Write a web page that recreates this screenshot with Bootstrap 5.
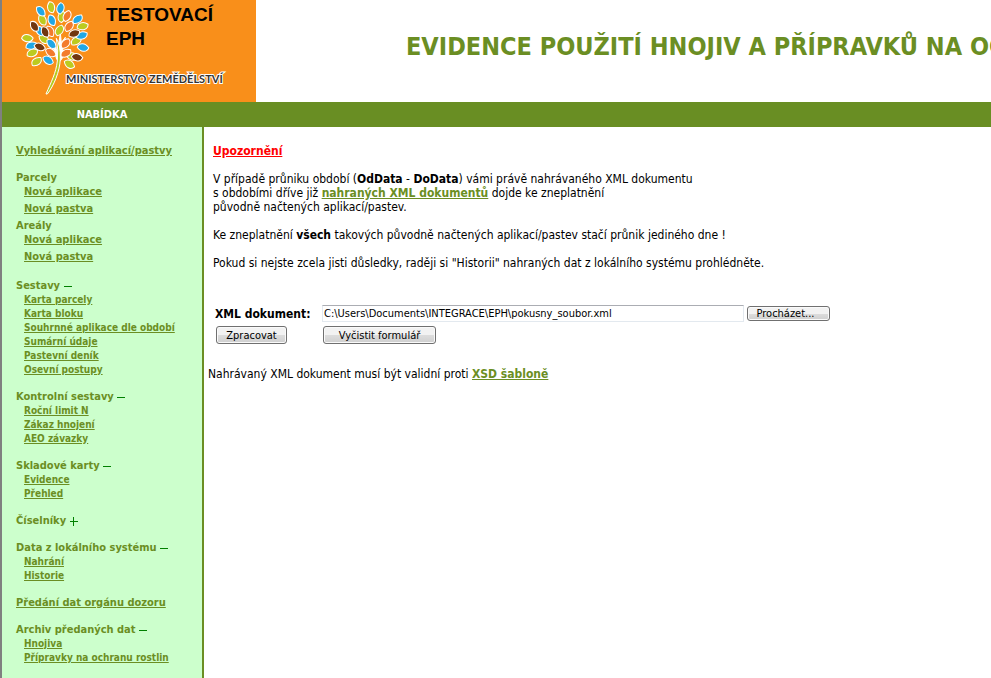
<!DOCTYPE html>
<html lang="cs">
<head>
<meta charset="utf-8">
<meta name="viewport" content="width=device-width, initial-scale=1">
<title>Evidence použití hnojiv a přípravků na ochranu rostlin</title>
<link href="https://cdn.jsdelivr.net/npm/bootstrap@5.3.0/dist/css/bootstrap.min.css" rel="stylesheet">
<style>
:root { --olive: #6b8e23; --mint: #ccffcc; }
body { font-family: "DejaVu Sans Condensed", "Noto Sans", sans-serif; font-size: 12px; line-height: 14px; color: #000; border-left: 2px solid #808080; }
a, a:hover { color: var(--olive); font-weight: bold; }
.logo { width: 254px; height: 102px; display: block; }
.site-title { color: var(--olive); font-size: 25px; line-height: 30px; font-weight: bold; padding: 32px 0 0 150px; }
.menu-bar { background: #698e23; color: #fff; height: 25px; font-size: 11px; }
.side { width: 202px; }
.menu-bar .side { padding-right: 2px; }
.side-menu { background: var(--mint); border-right: 2px solid var(--olive); padding: 16px 0 14px 14px; color: var(--olive); font-weight: bold; font-size: 11px; }
.group { margin-bottom: 12px; white-space: nowrap; }
.group-head { font-size: 11px; line-height: 15px; font-weight: bold; margin: 0; }
.sub { font-size: 10px; line-height: 14px; padding-left: 8px; }
.sub-large { font-size: 11px; line-height: 14px; padding-left: 8px; margin-bottom: 2px; }
.sub-large li + li { margin-top: 3px; }
.areas { margin-bottom: 14px; }
.toggle { border: 0; background: none; padding: 0; line-height: 0; vertical-align: middle; }
.toggle svg { display: block; }
.content { padding: 17px 8px 0 9px; }
.content p { margin-bottom: 14px; }
.notice { color: #f00; font-size: 12px; line-height: 14px; font-weight: bold; text-decoration: underline; margin-bottom: 14px; }
.upload { margin: 35px 0 23px 2px; }
.field-label { width: 107px; font-weight: bold; }
.file-path { width: 422px; height: 17px; border: 1px solid #e3e9ef; border-top-color: #abadb3; padding: 0 1px; font-size: 11px; line-height: 15px; color: #000; }
.win-btn { border: 1px solid #707070; border-radius: 3px; background: linear-gradient(#f2f2f2 0 50%, #dddddd 50%, #cfcfcf); box-shadow: inset 0 0 0 1px #fafafa; font-size: 11px; line-height: 13px; padding: 0; height: 18px; color: #000; }
.browse { width: 83px; height: 15px; padding-right: 6px; line-height: 12px; margin-left: 3px; }
.send { width: 71px; }
.clear { width: 113px; }
.actions { padding: 4px 0 0 1px; }
.after-form { margin-left: -5px; }
</style>
<script src="https://cdn.jsdelivr.net/npm/bootstrap@5.3.0/dist/js/bootstrap.bundle.min.js"></script>
</head>
<body class="min-vh-100 d-flex flex-column overflow-x-hidden">
<header class="d-flex bg-white overflow-hidden">
  <svg class="logo flex-shrink-0" viewBox="2 0 254 102" role="img" aria-label="Ministerstvo zemědělství – testovací EPH">
    <rect x="2" width="254" height="102" fill="#f98f1a"/>
    <defs><path id="leaf" d="M-17 3C-15-12 3-16 17-4C15 12-4 15-17 3Z"/></defs>
    <g transform="translate(20 0) scale(.3333)" stroke="#fff" stroke-width="3">
      <path d="M110 178L96 128L104 126L112 160L121 100L124 128L136 112L126 160L146 148L120 184Z" fill="#fff"/>
      <path d="M78 282C94 245 108 219 112 183Q116 150 109 115Q122 136 121 177C119 216 101 258 82 282Z" fill="#b5c91f"/>
      <g fill="#bccb20">
        <use href="#leaf" transform="translate(93 22) rotate(82)"/><use href="#leaf" transform="translate(125 50) rotate(105)"/>
        <use href="#leaf" transform="translate(67 60) rotate(68)"/><use href="#leaf" transform="translate(118 91) rotate(125)"/>
        <use href="#leaf" transform="translate(188 79) rotate(-8)"/><use href="#leaf" transform="translate(72 118) rotate(40)"/>
        <use href="#leaf" transform="translate(22 115) rotate(10)"/><use href="#leaf" transform="translate(37 159) rotate(-18)"/>
        <use href="#leaf" transform="translate(169 123) rotate(-30)"/><use href="#leaf" transform="translate(157 170) rotate(20)"/>
        <use href="#leaf" transform="translate(50 185) rotate(-32)"/><use href="#leaf" transform="translate(148 193) rotate(40)"/>
      </g>
      <g fill="#20a7e5">
        <use href="#leaf" transform="translate(62 34) rotate(55)"/><use href="#leaf" transform="translate(121 25) rotate(105)"/>
        <use href="#leaf" transform="translate(95 61) rotate(74)"/><use href="#leaf" transform="translate(173 58) rotate(-35)"/>
        <use href="#leaf" transform="translate(60 93) rotate(58)"/><use href="#leaf" transform="translate(186 107) rotate(-15)"/>
        <use href="#leaf" transform="translate(94 132) rotate(50)"/><use href="#leaf" transform="translate(34 137) rotate(-12)"/>
        <use href="#leaf" transform="translate(189 143) rotate(15)"/><use href="#leaf" transform="translate(84 181) rotate(38)"/>
      </g>
      <g fill="#f37b2c">
        <use href="#leaf" transform="translate(141 48) rotate(120)"/><use href="#leaf" transform="translate(90 94) rotate(70)"/>
        <use href="#leaf" transform="translate(147 79) rotate(130)"/><use href="#leaf" transform="translate(137 131) rotate(-45)"/>
        <use href="#leaf" transform="translate(92 158) rotate(38)"/><use href="#leaf" transform="translate(138 160) rotate(-25)"/>
      </g>
      <g fill="#713710">
        <use href="#leaf" transform="translate(43 79) rotate(62)"/><use href="#leaf" transform="translate(75 96) rotate(70)"/>
        <use href="#leaf" transform="translate(163 101) rotate(-15)"/><use href="#leaf" transform="translate(59 141) rotate(25)"/>
        <use href="#leaf" transform="translate(171 172) rotate(18)"/>
      </g>
    </g>
    <g font-family="Liberation Sans, Arial, sans-serif" font-weight="bold" font-size="19" fill="#000">
      <text x="106" y="21">TESTOVACÍ</text><text x="106" y="45">EPH</text>
    </g>
    <text x="66" y="83" font-family="Lato, sans-serif" font-weight="bold" font-size="11" fill="#333" stroke="#fff" stroke-width="2" paint-order="stroke">MINISTERSTVO ZEMĚDĚLSTVÍ</text>
  </svg>
  <h1 class="site-title m-0 text-nowrap">EVIDENCE POUŽITÍ HNOJIV A PŘÍPRAVKŮ NA OCHRANU ROSTLIN</h1>
</header>
<div class="menu-bar d-flex align-items-center"><div class="side text-center fw-bold">NABÍDKA</div></div>
<div class="d-flex flex-grow-1 bg-white">
  <nav class="side side-menu flex-shrink-0" aria-label="Nabídka">
    <div class="group"><div class="group-head"><a href="#">Vyhledávání aplikací/pastvy</a></div></div>
    <div class="group areas">
      <h2 class="group-head">Parcely</h2>
      <ul class="list-unstyled sub-large"><li><a href="#">Nová aplikace</a></li><li><a href="#">Nová pastva</a></li></ul>
      <h2 class="group-head">Areály</h2>
      <ul class="list-unstyled sub-large mb-0"><li><a href="#">Nová aplikace</a></li><li><a href="#">Nová pastva</a></li></ul>
    </div>
    <div class="group">
      <h2 class="group-head">Sestavy <button class="toggle" type="button" aria-label="Sbalit Sestavy"><svg width="8" height="9"><path d="M0 4.500H8" stroke="#008000"/></svg></button></h2>
      <ul class="list-unstyled sub mb-0"><li><a href="#">Karta parcely</a></li><li><a href="#">Karta bloku</a></li><li><a href="#">Souhrnné aplikace dle období</a></li><li><a href="#">Sumární údaje</a></li><li><a href="#">Pastevní deník</a></li><li><a href="#">Osevní postupy</a></li></ul>
    </div>
    <div class="group">
      <h2 class="group-head">Kontrolní sestavy <button class="toggle" type="button" aria-label="Sbalit Kontrolní sestavy"><svg width="8" height="9"><path d="M0 4.500H8" stroke="#008000"/></svg></button></h2>
      <ul class="list-unstyled sub mb-0"><li><a href="#">Roční limit N</a></li><li><a href="#">Zákaz hnojení</a></li><li><a href="#">AEO závazky</a></li></ul>
    </div>
    <div class="group">
      <h2 class="group-head">Skladové karty <button class="toggle" type="button" aria-label="Sbalit Skladové karty"><svg width="8" height="9"><path d="M0 4.500H8" stroke="#008000"/></svg></button></h2>
      <ul class="list-unstyled sub mb-0"><li><a href="#">Evidence</a></li><li><a href="#">Přehled</a></li></ul>
    </div>
    <div class="group">
      <h2 class="group-head">Číselníky <button class="toggle" type="button" aria-label="Rozbalit Číselníky"><svg width="9" height="9"><path d="M0 4.500H8M3.500 0V9" stroke="#008000"/></svg></button></h2>
    </div>
    <div class="group">
      <h2 class="group-head">Data z lokálního systému <button class="toggle" type="button" aria-label="Sbalit Data z lokálního systému"><svg width="8" height="9"><path d="M0 4.500H8" stroke="#008000"/></svg></button></h2>
      <ul class="list-unstyled sub mb-0"><li><a href="#">Nahrání</a></li><li><a href="#">Historie</a></li></ul>
    </div>
    <div class="group"><div class="group-head"><a href="#">Předání dat orgánu dozoru</a></div></div>
    <div class="group mb-0">
      <h2 class="group-head">Archiv předaných dat <button class="toggle" type="button" aria-label="Sbalit Archiv předaných dat"><svg width="8" height="9"><path d="M0 4.500H8" stroke="#008000"/></svg></button></h2>
      <ul class="list-unstyled sub mb-0"><li><a href="#">Hnojiva</a></li><li><a href="#">Přípravky na ochranu rostlin</a></li></ul>
    </div>
  </nav>
  <main class="content flex-grow-1">
    <h2 class="notice">Upozornění</h2>
    <p>V případě průniku období (<b>OdData</b> - <b>DoData</b>) vámi právě nahrávaného XML dokumentu<br>s obdobími dříve již <a href="#">nahraných XML dokumentů</a> dojde ke zneplatnění<br>původně načtených aplikací/pastev.</p>
    <p>Ke zneplatnění <b>všech</b> takových původně načtených aplikací/pastev stačí průnik jediného dne !</p>
    <p>Pokud si nejste zcela jisti důsledky, raději si "Historii" nahraných dat z lokálního systému prohlédněte.</p>
    <form class="upload">
      <div class="d-flex align-items-center">
        <label class="field-label flex-shrink-0" for="xmlPath">XML dokument:</label>
        <input class="file-path" id="xmlPath" type="text" value="C:\Users\Documents\INTEGRACE\EPH\pokusny_soubor.xml">
        <button class="win-btn browse" type="button">Procházet...</button>
      </div>
      <div class="actions d-flex">
        <div class="field-label"><button class="win-btn send" type="submit">Zpracovat</button></div>
        <button class="win-btn clear" type="reset">Vyčistit formulář</button>
      </div>
    </form>
    <p class="after-form">Nahrávaný XML dokument musí být validní proti <a href="#">XSD šabloně</a></p>
  </main>
</div>
</body>
</html>
